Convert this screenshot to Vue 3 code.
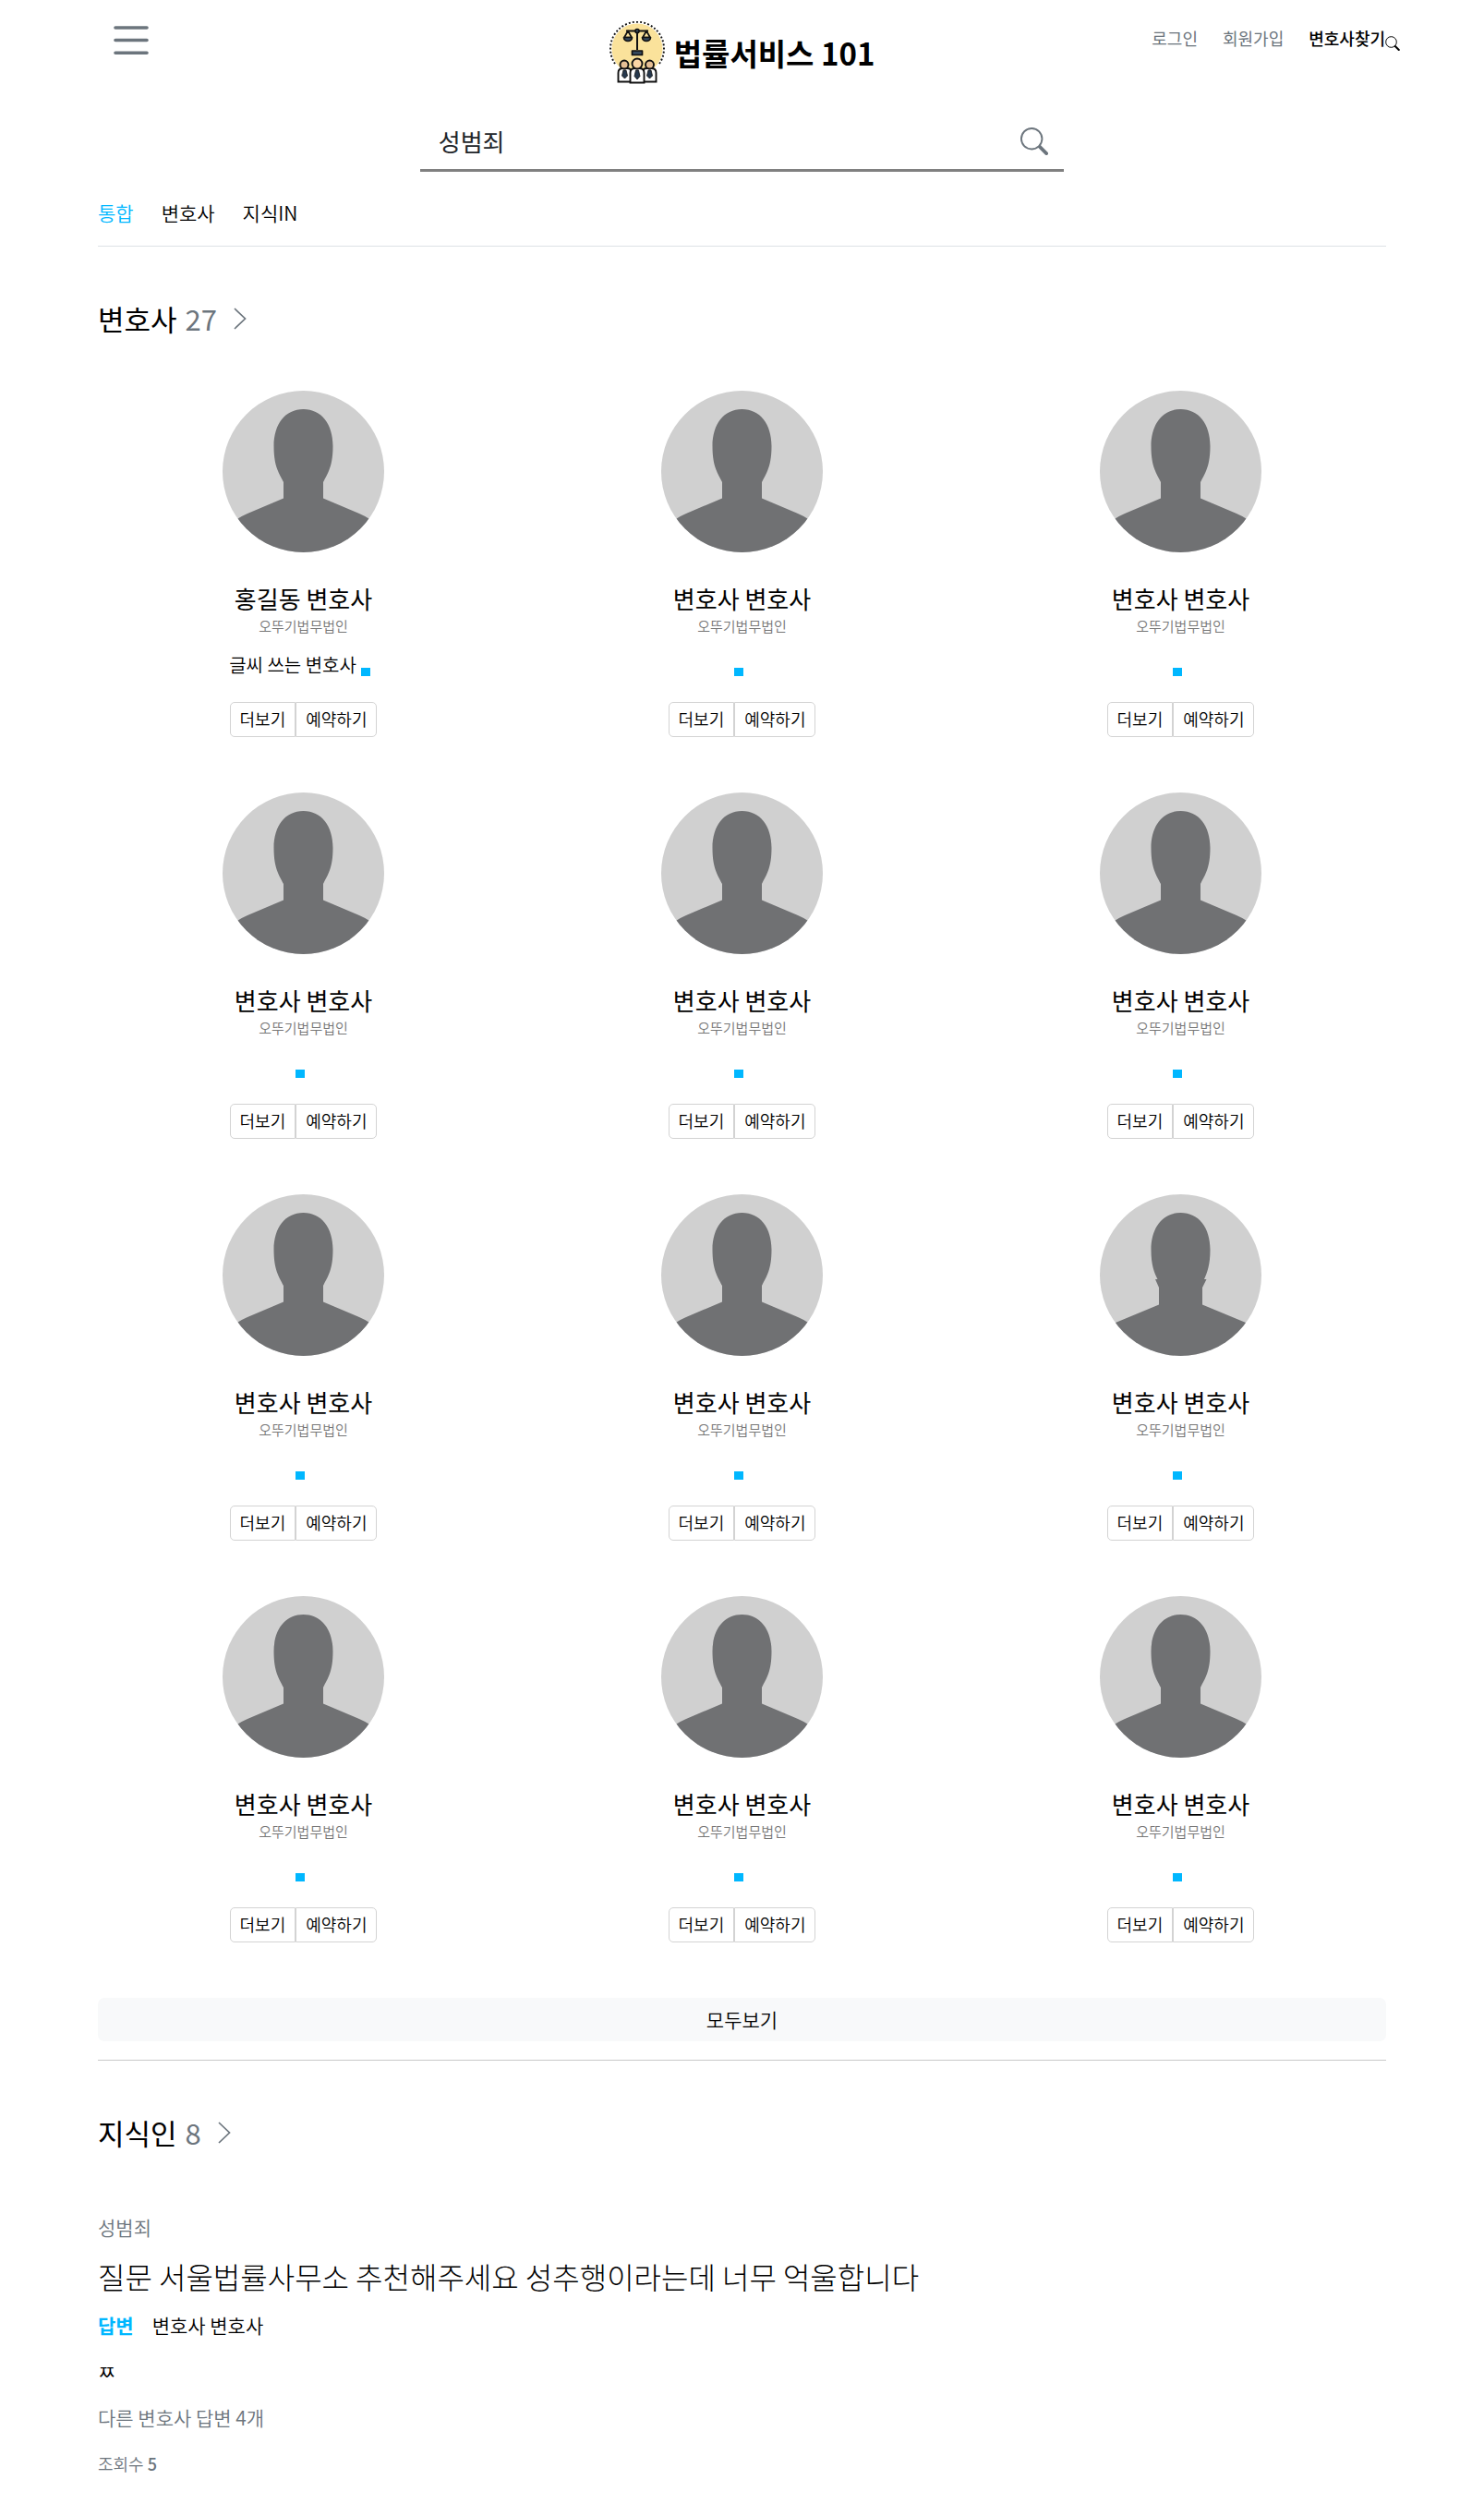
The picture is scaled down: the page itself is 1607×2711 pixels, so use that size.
<script setup>
import { ref } from 'vue'

const keyword = ref('성범죄')

const tabs = [
  { label: '통합', active: true },
  { label: '변호사', active: false },
  { label: '지식IN', active: false },
]

const lawyers = Array.from({ length: 12 }, (_, i) => ({
  id: i + 1,
  name: i === 0 ? '홍길동 변호사' : '변호사 변호사',
  firm: '오뚜기법무법인',
  intro: i === 0 ? '글씨 쓰는 변호사' : '',
  alt: i === 8,
}))

const headPath =
  'M87.5 20C107 20 119.5 36 119.5 60C119.5 82 114 89 109 99L109 116.5L148 133Q154 135.500 160 139.500L175 150V175H0V150L15 139.500Q21 135.500 27 133L66 116.500L66 99C61 89 55.500 82 55.500 60C55.500 36 68 20 87.500 20Z'
const altHeadPath =
  'M87.5 20C107 20 119.500 36 119.500 60C119.500 77 116 85 113 92H115.500L111 101V119.500L158 139L175 150V175H0V150L17 139L64 119.500V101L60 92H62.500C59 85 55.500 77 55.500 60C55.500 36 68 20 87.500 20Z'
</script>

<template>
  <div class="page">
    <header class="header">
      <div class="side">
        <button class="menu" type="button" aria-label="메뉴">
          <svg width="38" height="32" viewBox="0 0 38 32" fill="none" stroke="#6c757d" stroke-width="3.6" stroke-linecap="round">
            <path d="M2 2h34M2 15.500h34M2 29.300h34" />
          </svg>
        </button>
      </div>
      <a class="logo" href="#">
        <svg width="60" height="68" viewBox="0 0 60 68" aria-hidden="true">
          <circle cx="30" cy="30" r="27.500" fill="#fae29b" />
          <path d="M6 46A29 29 0 1 1 54 46" fill="none" stroke="#111" stroke-width="1.900" stroke-dasharray="1.900 2.200" />
          <g fill="none" stroke="#111" stroke-width="1.700" stroke-linejoin="round">
            <path d="M18 10.500h24M30 10v21" stroke-width="2" />
            <path d="M20 10.500l-4 7h8zM40 10.500l-4 7h8z" />
            <path d="M15.500 17.500h9a4.500 4 0 0 1-9 0zM35.500 17.500h9a4.500 4 0 0 1-9 0z" fill="#34495e" />
            <path d="M24.500 32h11v4.500h-11z" fill="#34495e" />
            <circle cx="30" cy="10.500" r="2" fill="#34495e" />
          </g>
          <g stroke="#111" stroke-width="1.900">
            <path d="M9.500 65.500V56q0-5 5-5h5q4 0 5 5v9.500zM35.500 65.500V56q0-5 5-5h5q5 0 5 5v9.500z" fill="#fff" />
            <circle cx="16" cy="47" r="4.500" fill="#e5bf94" />
            <circle cx="43.500" cy="47" r="4.500" fill="#e5bf94" />
            <path d="M22.500 66.500V56q0-5 5-5h5q5 0 5 5v10.500z" fill="#fff" />
            <circle cx="30" cy="46" r="5.500" fill="#fbd6a5" />
          </g>
          <g fill="#26384d" stroke="#111" stroke-width=".8">
            <path d="M15 53h3l1.500 6-3 3-3-3zM42 53h3l1.500 6-3 3-3-3zM28.500 53h3l1.500 6.500-3 3.500-3-3.500z" />
          </g>
        </svg>
        <span>법률서비스 101</span>
      </a>
      <nav class="side links" aria-label="사용자 메뉴">
        <a href="#">로그인</a>
        <a href="#">회원가입</a>
        <a class="find" href="#">변호사찾기<svg width="16" height="16" viewBox="0 0 16 16" fill="none" stroke="currentColor" aria-hidden="true">
          <circle cx="6.500" cy="6.500" r="5.800" />
          <path d="M10.800 11l4 4" stroke-width="2" stroke-linecap="round" />
        </svg></a>
      </nav>
    </header>

    <main class="content">
      <form class="search" role="search" @submit.prevent>
        <input v-model="keyword" type="text" aria-label="검색어" />
        <button type="submit" aria-label="검색">
          <svg width="30" height="30" viewBox="0 0 16 16" fill="#6c757d" aria-hidden="true">
            <path d="M11.742 10.344a6.500 6.500 0 1 0-1.397 1.398h-.001c.03.04.062.078.098.115l3.850 3.850a1 1 0 0 0 1.415-1.414l-3.850-3.850a1.007 1.007 0 0 0-.115-.1zM12 6.500a5.500 5.500 0 1 1-11 0 5.500 5.500 0 0 1 11 0z" />
          </svg>
        </button>
      </form>

      <nav class="tabs" aria-label="검색 구분">
        <a v-for="tab in tabs" :key="tab.label" href="#" :class="{ active: tab.active }">{{ tab.label }}</a>
      </nav>

      <section>
        <h2>
          변호사 <span>27</span>
          <svg width="14" height="24" viewBox="0 0 14 24" fill="none" stroke="#6c757d" stroke-width="1.700" aria-hidden="true"><path d="M1 1l11.500 11L1 23" /></svg>
        </h2>
        <div class="grid">
          <article v-for="lawyer in lawyers" :key="lawyer.id" class="card">
            <svg class="avatar" viewBox="0 0 175 175" role="img" aria-label="프로필 사진">
              <rect width="175" height="175" fill="#d0d0d0" />
              <path :d="lawyer.alt ? altHeadPath : headPath" fill="#707173" />
            </svg>
            <h3>{{ lawyer.name }}</h3>
            <p class="firm">{{ lawyer.firm }}</p>
            <div class="intro">
              <p v-if="lawyer.intro">{{ lawyer.intro }}</p>
              <span class="mark"></span>
            </div>
            <div class="actions">
              <button type="button">더보기</button>
              <button type="button">예약하기</button>
            </div>
          </article>
        </div>
        <button class="all" type="button">모두보기</button>
      </section>

      <section class="knowledge">
        <h2>
          지식인 <span>8</span>
          <svg width="14" height="24" viewBox="0 0 14 24" fill="none" stroke="#6c757d" stroke-width="1.700" aria-hidden="true"><path d="M1 1l11.500 11L1 23" /></svg>
        </h2>
        <article class="question">
          <p class="muted">성범죄</p>
          <h3><a href="#">질문 서울법률사무소 추천해주세요 성추행이라는데 너무 억울합니다</a></h3>
          <p class="answer"><strong>답변</strong><span>변호사 변호사</span></p>
          <p class="body">ㅉ</p>
          <p class="muted">다른 변호사 답변 4개</p>
          <p class="views">조회수 <span>5</span></p>
        </article>
      </section>
    </main>
  </div>
</template>

<style>
body {
  margin: 0;
  background: #fff;
}
</style>

<style scoped>
.page {
  font-family: "Noto Sans CJK KR", sans-serif;
  font-weight: 350;
  font-size: 21px;
  line-height: 30px;
  color: #000;
}
.page * {
  box-sizing: border-box;
}
h2, h3, p {
  margin: 0;
}
a {
  color: inherit;
  text-decoration: none;
}
button, input {
  font: inherit;
  color: inherit;
  background: none;
  border: 0;
  padding: 0;
  margin: 0;
}
button {
  cursor: pointer;
}
svg {
  flex: none;
}
.header {
  display: flex;
  align-items: flex-start;
  height: 118px;
  padding: 0 91px;
}
.side {
  flex: 1 1 0;
}
.menu {
  display: flex;
  padding: 28px 32px;
}
.logo {
  display: flex;
  align-items: center;
  gap: 10px;
  padding-top: 23px;
  font-size: 33px;
  font-weight: 700;
  white-space: nowrap;
}
.links {
  display: flex;
  justify-content: flex-end;
  gap: 27px;
  padding-top: 26px;
  font-size: 18px;
  font-weight: 400;
  color: #6c757d;
}
.links .find {
  display: flex;
  align-items: flex-end;
  font-weight: 500;
  color: #000;
}
.find svg {
  margin-bottom: 1px;
}
.content {
  padding: 0 106px 27px;
}
.search {
  display: flex;
  align-items: center;
  width: 50%;
  height: 68px;
  margin: 0 auto;
  padding: 4px 17px 0 20px;
  border-bottom: 3px solid #808080;
}
.search input {
  flex: 1;
  min-width: 0;
  font-size: 26px;
  font-weight: 400;
  line-height: 40px;
  color: #212529;
  outline: 0;
}
.search button {
  display: flex;
}
.tabs {
  display: flex;
  gap: 30px;
  padding: 29px 0 21px;
  border-bottom: 1px solid #dee2e6;
}
.tabs .active {
  color: #00b7ff;
}
h2 {
  display: flex;
  align-items: center;
  margin: 56px 0;
  font-size: 31px;
  font-weight: 400;
  line-height: 44px;
}
h2 span {
  margin: 0 18px 0 9px;
  color: #6c757d;
}
.grid {
  display: grid;
  grid-template-columns: repeat(3, 1fr);
  gap: 60px 30px;
}
.card {
  display: flex;
  flex-direction: column;
  align-items: center;
}
.avatar {
  width: 175px;
  height: 175px;
  border-radius: 50%;
}
.card h3 {
  margin: 31px 0 1px;
  font-size: 26px;
  font-weight: 400;
  line-height: 38px;
}
.firm {
  font-size: 15px;
  line-height: 20px;
  color: #777;
}
.intro {
  display: flex;
  align-items: flex-end;
  gap: 5px;
  height: 30px;
  margin-top: 17px;
  font-size: 20px;
}
.mark {
  width: 10px;
  height: 9px;
  margin: 0 8px 3px 0;
  background: #00b7ff;
}
.actions {
  display: flex;
  margin-top: 25px;
}
.actions button {
  height: 38px;
  padding: 0 10px 2px;
  border: 1px solid #d3d3d3;
  font-size: 18px;
}
.actions button:first-child {
  border-radius: 5px 0 0 5px;
}
.actions button:last-child {
  border-radius: 0 5px 5px 0;
}
.all {
  display: block;
  width: 100%;
  height: 47px;
  margin-top: 60px;
  padding-bottom: 2px;
  border-radius: 7px;
  background: #f8f9fa;
}
.knowledge {
  margin-top: 20px;
  border-top: 1px solid #c8c8c8;
}
.question {
  display: flex;
  flex-direction: column;
  gap: 20px;
  padding-top: 9px;
}
.question h3 {
  margin: -6px 0;
  font-size: 32px;
  font-weight: 300;
  line-height: 48px;
}
.muted, .views {
  color: #6c757d;
}
.answer {
  display: flex;
  gap: 20px;
}
.answer strong {
  font-weight: 700;
  color: #00b7ff;
}
.views {
  font-size: 18px;
}
.views span {
  font-weight: 500;
}
</style>
